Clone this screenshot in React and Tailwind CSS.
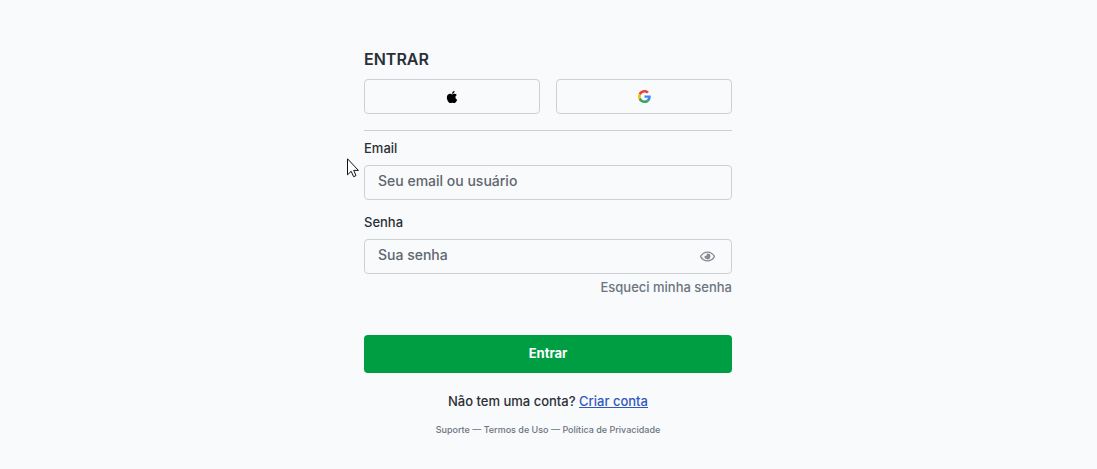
import { FaApple, FaRegEye } from "react-icons/fa";

function GoogleLogo() {
  return (
    <svg viewBox="0 0 48 48" className="size-[13px]" aria-hidden="true">
      <path fill="#EA4335" d="M24 9.5c3.54 0 6.71 1.22 9.21 3.6l6.85-6.85C35.9 2.38 30.47 0 24 0 14.62 0 6.51 5.38 2.56 13.22l7.98 6.19C12.43 13.72 17.74 9.5 24 9.5z" />
      <path fill="#4285F4" d="M46.98 24.55c0-1.57-.15-3.09-.38-4.55H24v9.02h12.94c-.58 2.96-2.26 5.48-4.78 7.18l7.73 6c4.51-4.18 7.09-10.36 7.09-17.65z" />
      <path fill="#FBBC05" d="M10.53 28.59c-.48-1.45-.76-2.99-.76-4.59s.27-3.14.76-4.59l-7.98-6.19C.92 16.46 0 20.12 0 24c0 3.88.92 7.54 2.56 10.78l7.97-6.19z" />
      <path fill="#34A853" d="M24 48c6.48 0 11.93-2.13 15.89-5.81l-7.73-6c-2.15 1.45-4.92 2.3-8.16 2.3-6.26 0-11.57-4.22-13.47-9.91l-7.98 6.19C6.51 42.62 14.62 48 24 48z" />
    </svg>
  );
}

function Cursor() {
  return (
    <svg viewBox="0 0 12 20" className="pointer-events-none absolute top-[111px] -left-[17px] h-5 w-3" aria-hidden="true">
      <path d="M.5.8v16l3.7-3.5 2.4 5.4 2.4-1.1-2.3-5.2h4.7z" fill="#fff" stroke="#111" strokeWidth="1" />
    </svg>
  );
}

const social =
  "flex h-[35px] flex-1 items-center justify-center rounded border border-[#ced0d4]";
const field =
  "block h-[35px] w-full rounded border border-[#ced0d4] bg-transparent px-[13px] pb-1 text-sm text-[#212529] placeholder:text-[#5f666d] placeholder:opacity-100";
const label = "block text-[13px] leading-5";

export default function App() {
  return (
    <div className="min-h-screen bg-[#f8fafc] pt-[47px] pr-[17px] pb-8 pl-4 font-['Inter',sans-serif] font-medium text-[#2b2f36]">
      <main className="relative mx-auto max-w-[368px]">
        <h1 className="mb-2 text-base font-semibold">ENTRAR</h1>
        <div className="flex gap-4">
          <button type="button" aria-label="Entrar com Apple" className={social}>
            <FaApple className="size-[14px] text-black" />
          </button>
          <button type="button" aria-label="Entrar com Google" className={social}>
            <GoogleLogo />
          </button>
        </div>
        <hr className="mt-4 mb-[7px] border-[#ced0d4]" />
        <form onSubmit={(e) => e.preventDefault()}>
          <label htmlFor="email" className={label}>Email</label>
          <input id="email" type="text" placeholder="Seu email ou usuário" className={`${field} mt-[7px]`} />
          <label htmlFor="senha" className={`${label} mt-3`}>Senha</label>
          <div className="relative mt-[7px]">
            <input id="senha" type="password" placeholder="Sua senha" className={field} />
            <button type="button" aria-label="Mostrar senha" className="absolute inset-y-0 right-[17px] flex items-center pb-px text-[#868b92]">
              <FaRegEye className="size-[15px]" />
            </button>
          </div>
          <div className="mt-[3px] text-right text-[13px] leading-5 text-[#6c757d]">
            <a href="#recuperar">Esqueci minha senha</a>
          </div>
          <button type="submit" className="mt-[38px] h-[38px] w-full rounded bg-[#009e42] text-[13px] font-bold text-white">
            Entrar
          </button>
        </form>
        <p className="mt-[18px] text-center text-[13px] leading-5">
          Não tem uma conta? <a href="#criar" className="text-[#3159bd] underline">Criar conta</a>
        </p>
        <footer className="mt-[11px] text-center text-[9px] leading-4 text-[#6c757d]">
          <a href="#suporte">Suporte</a> — <a href="#termos">Termos de Uso</a> — <a href="#privacidade">Política de Privacidade</a>
        </footer>
        <Cursor />
      </main>
    </div>
  );
}
